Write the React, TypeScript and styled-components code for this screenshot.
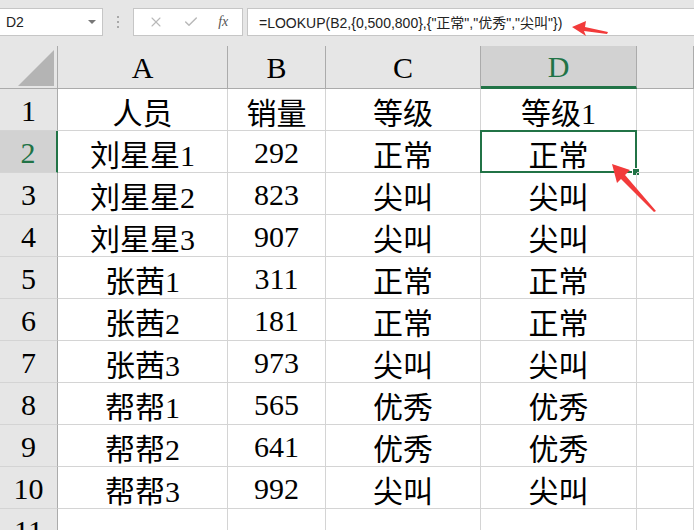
import styled, { createGlobalStyle } from "styled-components";
import { X, Check } from "lucide-react";

const GlobalStyle = createGlobalStyle`
  html, body {
    margin: 0;
    padding: 0;
    background: #ffffff;
  }
  * {
    box-sizing: border-box;
  }
`;

const green = "#217346";
const gridLine = "#d4d4d4";
const headerBg = "#e6e6e6";
const headerActive = "#d2d2d2";

const Page = styled.div`
  position: relative;
  width: 694px;
  height: 530px;
  overflow: hidden;
  background: #ffffff;
`;

const Toolbar = styled.div`
  display: flex;
  align-items: center;
  height: 46px;
  padding: 8px 0 11px 0;
  background: ${headerBg};
`;

const NameBox = styled.div`
  display: flex;
  align-items: center;
  justify-content: space-between;
  width: 103px;
  height: 28px;
  padding: 0 6px 0 6px;
  background: #ffffff;
  border: 1px solid #c6c6c6;
  border-left: none;
  font-family: "Liberation Sans", Arial, sans-serif;
  font-size: 14px;
  color: #222;
`;

const DropArrow = styled.span`
  width: 0;
  height: 0;
  border-left: 4px solid transparent;
  border-right: 4px solid transparent;
  border-top: 4px solid #777;
`;

const Dots = styled.div`
  display: flex;
  flex-direction: column;
  gap: 3px;
  width: 30px;
  align-items: center;
  span {
    width: 2px;
    height: 2px;
    background: #a8a8a8;
  }
`;

const ButtonBox = styled.div`
  display: flex;
  align-items: center;
  justify-content: space-around;
  width: 110px;
  height: 28px;
  padding: 0 4px;
  background: #ffffff;
  border: 1px solid #c6c6c6;
`;

const Fx = styled.span`
  font-family: "Liberation Serif", serif;
  font-style: italic;
  font-size: 14px;
  color: #555;
`;

const FormulaBox = styled.div`
  flex: 1;
  height: 28px;
  margin-left: 4px;
  padding: 0 0 0 11px;
  display: flex;
  align-items: center;
  background: #ffffff;
  border: 1px solid #c6c6c6;
  border-right: none;
  font-family: "Liberation Sans", "Noto Sans CJK SC", sans-serif;
  font-size: 14px;
  color: #222;
  white-space: nowrap;
`;

const Sheet = styled.div`
  display: grid;
  grid-template-columns: 58px 170px 98px 155px 156px 1fr;
  grid-template-rows: 43px repeat(10, 42px) 42px;
  font-family: "Liberation Serif", "Noto Sans CJK SC", serif;
  font-size: 30px;
  color: #000;
`;

const Corner = styled.div`
  position: relative;
  background: ${headerBg};
  border-right: 1px solid #ababab;
  border-bottom: 1px solid #ababab;
  svg {
    position: absolute;
    left: 18px;
    top: 4px;
  }
`;

const ColHead = styled.div<{ $active?: boolean }>`
  display: flex;
  align-items: center;
  justify-content: center;
  padding-top: 2px;
  background: ${(p) => (p.$active ? headerActive : headerBg)};
  color: ${(p) => (p.$active ? green : "#000")};
  border-right: 1px solid #ababab;
  border-bottom: ${(p) => (p.$active ? `3px solid ${green}` : "1px solid #ababab")};
  ${(p) => (p.$active ? "padding-bottom: 0;" : "")}
`;

const RowHead = styled.div<{ $active?: boolean }>`
  display: flex;
  align-items: center;
  justify-content: center;
  padding-top: 2px;
  background: ${(p) => (p.$active ? headerActive : headerBg)};
  color: ${(p) => (p.$active ? green : "#000")};
  border-right: ${(p) => (p.$active ? `2px solid ${green}` : "1px solid #ababab")};
  border-bottom: 1px solid ${gridLine};
`;

const Cell = styled.div<{ $selected?: boolean }>`
  position: relative;
  display: flex;
  align-items: center;
  justify-content: center;
  padding-top: 2px;
  border-right: 1px solid ${gridLine};
  border-bottom: 1px solid ${gridLine};
  white-space: nowrap;
  ${(p) =>
    p.$selected
      ? `
    &::before {
      content: "";
      position: absolute;
      left: -1px;
      top: -1px;
      right: -1px;
      bottom: -1px;
      border: 2px solid ${green};
    }
    &::after {
      content: "";
      position: absolute;
      right: -4px;
      bottom: -4px;
      width: 6px;
      height: 6px;
      background: ${green};
      border: 1px solid #fff;
    }
  `
      : ""}
`;

const Overlay = styled.svg`
  position: absolute;
  left: 0;
  top: 0;
  pointer-events: none;
`;

const rows: string[][] = [
  ["人员", "销量", "等级", "等级1"],
  ["刘星星1", "292", "正常", "正常"],
  ["刘星星2", "823", "尖叫", "尖叫"],
  ["刘星星3", "907", "尖叫", "尖叫"],
  ["张茜1", "311", "正常", "正常"],
  ["张茜2", "181", "正常", "正常"],
  ["张茜3", "973", "尖叫", "尖叫"],
  ["帮帮1", "565", "优秀", "优秀"],
  ["帮帮2", "641", "优秀", "优秀"],
  ["帮帮3", "992", "尖叫", "尖叫"],
];

const App = () => {
  return (
    <Page>
      <GlobalStyle />
      <Toolbar>
        <NameBox>
          <span>D2</span>
          <DropArrow />
        </NameBox>
        <Dots>
          <span />
          <span />
          <span />
        </Dots>
        <ButtonBox>
          <X size={16} color="#b9b9b9" strokeWidth={1.6} />
          <Check size={16} color="#b9b9b9" strokeWidth={2.2} />
          <Fx>fx</Fx>
        </ButtonBox>
        <FormulaBox>=LOOKUP(B2,{"{0,500,800},{\"正常\",\"优秀\",\"尖叫\"})"}</FormulaBox>
      </Toolbar>
      <Sheet>
        <Corner>
          <svg width="37" height="36" viewBox="0 0 37 36">
            <polygon points="36,0 36,36 0,36" fill="#b4b4b4" />
          </svg>
        </Corner>
        {["A", "B", "C", "D"].map((c) => (
          <ColHead key={c} $active={c === "D"}>
            {c}
          </ColHead>
        ))}
        <ColHead />
        {rows.map((r, i) => (
          <Row key={i} index={i + 1} cells={r} />
        ))}
        <RowHead>11</RowHead>
        <Cell />
        <Cell />
        <Cell />
        <Cell />
        <Cell />
      </Sheet>
      <Overlay width="694" height="530" viewBox="0 0 694 530">
        <polygon
          points="572,27 586,21 585,27 608,32 607,34 584,31 586,36"
          fill="#f23b3b"
        />
        <polygon
          points="612,164 630,170 625,175 656,211 654,212 621,179 617,183"
          fill="#f23b3b"
        />
      </Overlay>
    </Page>
  );
};

const Row = ({ index, cells }: { index: number; cells: string[] }) => (
  <>
    <RowHead $active={index === 2}>{index}</RowHead>
    {cells.map((v, j) => (
      <Cell key={j} $selected={index === 2 && j === 3}>
        {v}
      </Cell>
    ))}
    <Cell />
  </>
);

export default App;
